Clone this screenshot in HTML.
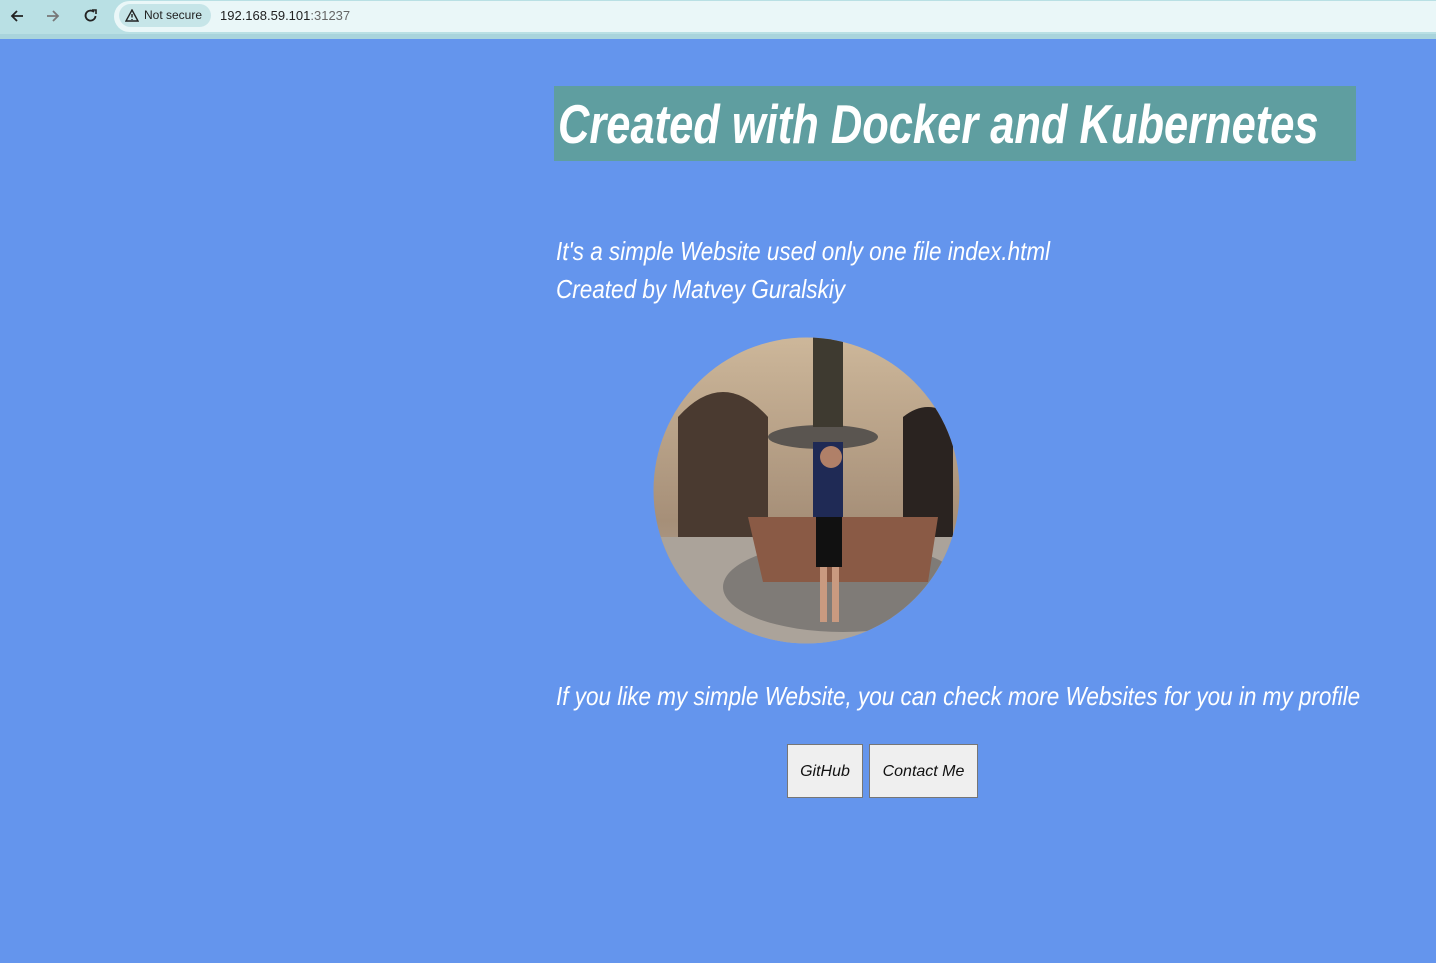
<!DOCTYPE html>
<html><head><meta charset="utf-8"><style>
*{margin:0;padding:0;box-sizing:border-box}
body{width:1436px;height:963px;overflow:hidden;background:#6495ed;font-family:"Liberation Sans",sans-serif;position:relative}
.bar{position:absolute;left:0;top:0;width:1436px;height:34px;background:#b9e0e4}
.bar2{position:absolute;left:0;top:34px;width:1436px;height:5px;background:#a9d4dc}
.url{position:absolute;left:114px;top:1px;width:1322px;height:31px;background:#eaf7f8;border-radius:16px 0 0 16px}
.chip{position:absolute;left:119px;top:4px;width:92px;height:23px;background:#c6e5e8;border-radius:12px;font-size:12px;color:#222;line-height:23px;padding-left:25px}
.t{position:absolute;color:#fff;font-style:italic;white-space:nowrap;transform-origin:left top}
.btn{position:absolute;top:744px;height:54px;background:#efefef;border:1px solid #767676;font-style:italic;font-size:16px;color:#111;text-align:center;line-height:54px}
</style></head><body>
<div class="bar"></div><div class="bar2"></div><div class="url"></div>
<svg style="position:absolute;left:8px;top:7px" width="100" height="18" viewBox="0 0 100 18">
<path d="M15 9H4M9 4L4 9l5 5" stroke="#222" stroke-width="1.8" fill="none"/>
<path d="M39 9h11M45 4l5 5-5 5" stroke="#777" stroke-width="1.8" fill="none"/>
<path d="M86 5a5 5 0 1 0 1.5 4" stroke="#222" stroke-width="1.8" fill="none"/><path d="M84 3h4v4" stroke="#222" stroke-width="1.6" fill="none"/>
</svg>
<div class="chip"><svg style="position:absolute;left:6px;top:5px" width="14" height="13"><path d="M7 1L13 12H1Z" stroke="#222" stroke-width="1.4" fill="none"/><path d="M7 5v3.5M7 10v1" stroke="#222" stroke-width="1.4"/></svg>Not secure</div>
<div style="position:absolute;left:220px;top:8px;font-size:13px;color:#222">192.168.59.101<span style="color:#666">:31237</span></div>

<div style="position:absolute;left:554px;top:86px;width:802px;height:75px;background:#5f9ea0"></div>
<div class="t" style="left:558px;top:92px;font-size:55px;font-weight:bold;transform:scaleX(0.79)">Created with Docker and Kubernetes</div>
<div class="t" style="left:556px;top:236px;font-size:26px;transform:scaleX(0.863)">It's a simple Website used only one file index.html</div>
<div class="t" style="left:556px;top:274px;font-size:26px;transform:scaleX(0.866)">Created by Matvey Guralskiy</div>

<svg style="position:absolute;left:653px;top:337px" width="307" height="307" viewBox="0 0 307 307">
<defs><clipPath id="c"><circle cx="153.5" cy="153.5" r="153"/></clipPath>
<linearGradient id="g" x1="0" y1="0" x2="0" y2="1"><stop offset="0" stop-color="#cdb79a"/><stop offset="0.6" stop-color="#a68f78"/><stop offset="1" stop-color="#b5aea6"/></linearGradient></defs>
<g clip-path="url(#c)">
<rect width="307" height="307" fill="url(#g)"/>
<path d="M25 205V80Q70 30 115 80V200Z" fill="#4a3a30"/>
<path d="M250 200V80Q275 60 300 80V200Z" fill="#2a2320"/>
<rect x="0" y="200" width="307" height="107" fill="#aba39a"/>
<ellipse cx="190" cy="250" rx="120" ry="45" fill="#7f7b77"/>
<path d="M95 180h190l-10 65H110Z" fill="#8a5a45"/>
<ellipse cx="170" cy="100" rx="55" ry="12" fill="#5a5550"/>
<rect x="160" y="0" width="30" height="90" fill="#3e3a30"/>
<rect x="160" y="105" width="30" height="75" fill="#1f2a55"/>
<rect x="163" y="180" width="26" height="50" fill="#111"/>
<rect x="167" y="230" width="7" height="55" fill="#c99a80"/><rect x="179" y="230" width="7" height="55" fill="#c99a80"/>
<circle cx="178" cy="120" r="11" fill="#b08068"/>
</g></svg>

<div class="t" style="left:556px;top:681px;font-size:26px;transform:scaleX(0.865)">If you like my simple Website, you can check more Websites for you in my profile</div>
<div class="btn" style="left:787px;width:76px">GitHub</div>
<div class="btn" style="left:869px;width:109px">Contact Me</div>
</body></html>
